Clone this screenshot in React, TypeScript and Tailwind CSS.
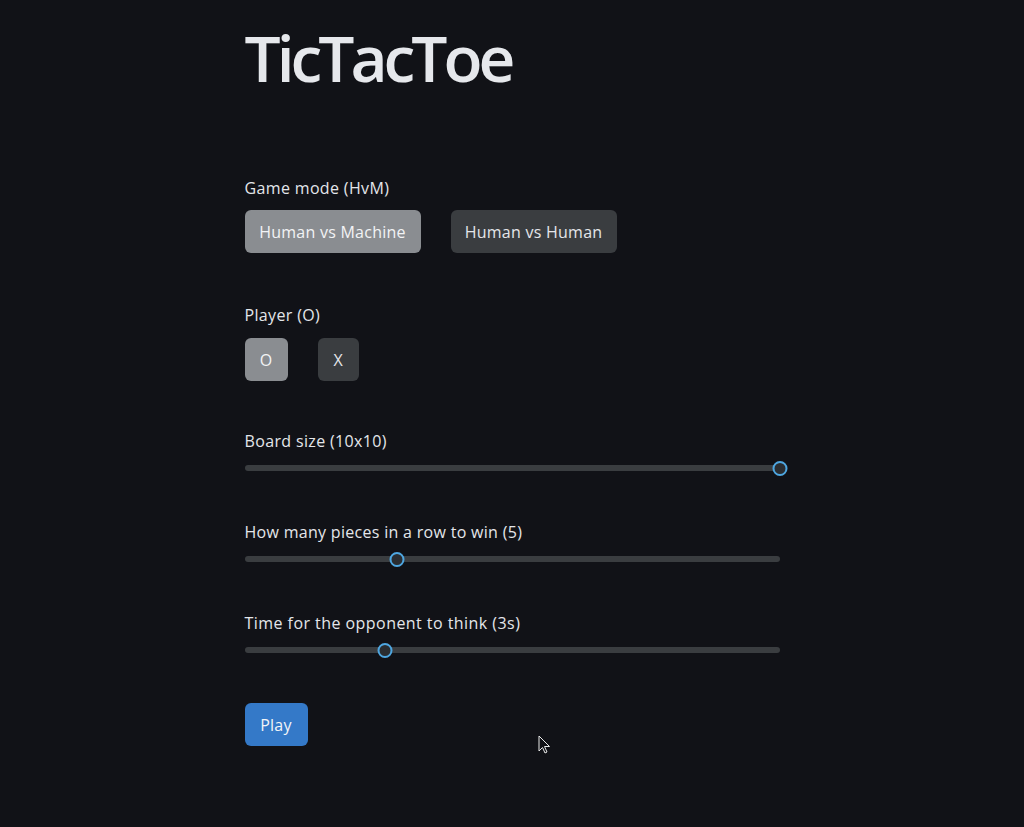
import React from "react";

const font = { fontFamily: '"Open Sans", "Noto Sans", sans-serif' };

function Slider({ frac }: { frac: number }) {
  return (
    <div className="relative h-4 w-full">
      <div className="absolute left-0 right-0 top-[5px] h-[6px] rounded-full bg-[#3a3d40]" />
      <div
        className="absolute top-[0.5px] h-[15px] w-[15px] -translate-x-1/2 rounded-full border-2 border-[#4ea6e0] bg-[#2a2d31]"
        style={{ left: `${frac * 100}%` }}
      />
    </div>
  );
}

export default function App() {
  return (
    <div
      className="relative min-h-[827px] w-full bg-[#111217] text-[#e4e6ea]"
      style={font}
    >
      <div className="mx-auto w-[535px] pt-[14px]">
        <h1 className="text-[64px] font-semibold leading-[88px] tracking-[-4px] text-[#e6e8ec]">
          TicTacToe
        </h1>

        <div className="mt-[74px]">
          <div className="text-base leading-6 tracking-[0.35px]">Game mode (HvM)</div>
          <div className="mt-[10px] flex gap-[30px]">
            <button className="h-[43px] w-[176px] rounded-md bg-[#8a8d91] text-base tracking-[0.25px] text-[#f2f3f5]">
              Human vs Machine
            </button>
            <button className="h-[43px] w-[166px] rounded-md bg-[#3a3d40] text-base tracking-[0.25px] text-[#e4e6ea]">
              Human vs Human
            </button>
          </div>
        </div>

        <div className="mt-[50px]">
          <div className="text-base leading-6 tracking-[0.35px]">Player (O)</div>
          <div className="mt-[11px] flex gap-[30px]">
            <button className="h-[43px] w-[43px] rounded-md bg-[#8a8d91] text-base text-[#f2f3f5]">
              O
            </button>
            <button className="h-[43px] w-[41px] rounded-md bg-[#3a3d40] text-base text-[#e4e6ea]">
              X
            </button>
          </div>
        </div>

        <div className="mt-[48px]">
          <div className="text-base leading-6 tracking-[0.35px]">Board size (10x10)</div>
          <div className="mt-[7px]">
            <Slider frac={1} />
          </div>
        </div>

        <div className="mt-[44px]">
          <div className="text-base leading-6 tracking-[0.3px]">How many pieces in a row to win (5)</div>
          <div className="mt-[7px]">
            <Slider frac={0.285} />
          </div>
        </div>

        <div className="mt-[44px]">
          <div className="text-base leading-6 tracking-[0.45px]">Time for the opponent to think (3s)</div>
          <div className="mt-[7px]">
            <Slider frac={0.262} />
          </div>
        </div>

        <button className="mt-[45px] h-[43px] w-[63px] rounded-md bg-[#3479c8] text-base tracking-[0.25px] text-[#f2f4f7]">
          Play
        </button>
      </div>

      <svg
        className="absolute left-[538px] top-[735px]"
        width="14"
        height="20"
        viewBox="0 0 14 20"
      >
        <path
          d="M1 1 L1 16 L4.5 12.5 L7 18 L9 17 L6.5 11.5 L11.5 11.5 Z"
          fill="#111217"
          stroke="#e8e8e8"
          strokeWidth="1"
          strokeLinejoin="round"
        />
      </svg>
    </div>
  );
}
